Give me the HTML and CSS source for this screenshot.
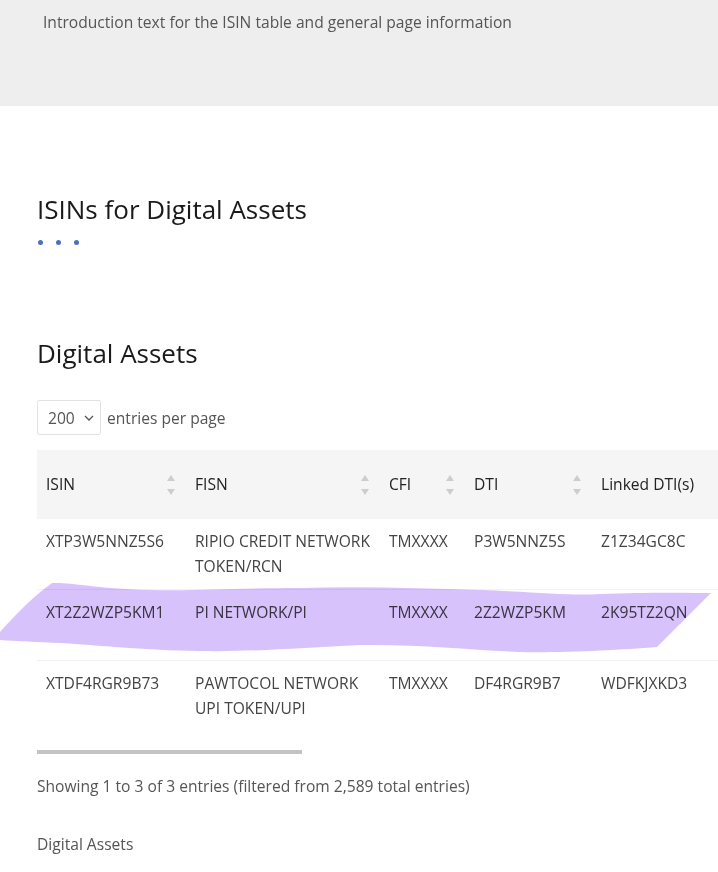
FILE: index.html
```html
<!DOCTYPE html>
<html lang="en">
<head>
<meta charset="utf-8">
<title>ISINs for Digital Assets</title>
<link rel="stylesheet" href="styles.css">
</head>
<body>
<header class="intro">
  <p class="intro-text">Introduction text for the ISIN table and general page information</p>
</header>

<main class="content">
  <section class="title-block">
    <h1 class="page-title">ISINs for Digital Assets</h1>
    <div class="dots"><span></span><span></span><span></span></div>
  </section>

  <section class="assets">
    <h2 class="section-title">Digital Assets</h2>
    <div class="length">
      <div class="select">
        <span class="select-value">200</span>
        <svg class="chev" width="10" height="6" viewBox="0 0 10 6"><path d="M1 1l4 4 4-4" fill="none" stroke="#555" stroke-width="1.3"/></svg>
      </div>
      <span class="length-label">entries per page</span>
    </div>

    <div class="table-wrap">
      <table class="grid">
        <colgroup>
          <col class="c1"><col class="c2"><col class="c3"><col class="c4"><col class="c5">
        </colgroup>
        <thead>
          <tr>
            <th><span>ISIN</span><i class="sort"></i></th>
            <th><span>FISN</span><i class="sort"></i></th>
            <th><span>CFI</span><i class="sort"></i></th>
            <th><span>DTI</span><i class="sort"></i></th>
            <th><span>Linked DTI(s)</span></th>
          </tr>
        </thead>
        <tbody>
          <tr>
            <td>XTP3W5NNZ5S6</td>
            <td>RIPIO CREDIT NETWORK TOKEN/RCN</td>
            <td>TMXXXX</td>
            <td>P3W5NNZ5S</td>
            <td>Z1Z34GC8C</td>
          </tr>
          <tr>
            <td>XT2Z2WZP5KM1</td>
            <td>PI NETWORK/PI</td>
            <td>TMXXXX</td>
            <td>2Z2WZP5KM</td>
            <td>2K95TZ2QN</td>
          </tr>
          <tr>
            <td>XTDF4RGR9B73</td>
            <td>PAWTOCOL NETWORK UPI TOKEN/UPI</td>
            <td>TMXXXX</td>
            <td>DF4RGR9B7</td>
            <td>WDFKJXKD3</td>
          </tr>
        </tbody>
      </table>
    </div>
    <div class="scrollbar"><div class="thumb"></div></div>

    <p class="info">Showing 1 to 3 of 3 entries (filtered from 2,589 total entries)</p>
    <p class="caption">Digital Assets</p>
  </section>
</main>

<svg class="highlight" width="718" height="80" viewBox="0 580 718 80" aria-hidden="true">
  <path d="M52 583 C70 582 90 588 150 590 C200 591 240 588 300 588 C360 586 420 588 480 590 C540 592 570 596 600 594 C650 592 690 593 711 593 L657 647 C620 650 560 653 520 652 C470 650 420 644 360 645 C300 648 250 652 200 651 C140 650 110 646 60 643 C40 642 15 641 0 640 L0 632 C20 610 35 595 52 583 Z" fill="#d8c2fb"/>
</svg>
</body>
</html>
```

FILE: styles.css
```css
html, body {
  margin: 0;
  padding: 0;
  background: #ffffff;
}

body {
  position: relative;
  width: 718px;
  overflow: hidden;
  font-family: "Open Sans", "Noto Sans", "Liberation Sans", sans-serif;
  font-size: 15.6px;
  color: #555555;
}

.intro {
  background: #eeeeee;
  height: 106px;
  padding: 10px 0 0 43px;
  box-sizing: border-box;
}

.intro-text {
  margin: 0;
  line-height: 24px;
  color: #555555;
}

.content {
  padding-left: 37px;
}

.title-block {
  padding-top: 85px;
}

.page-title {
  margin: 0;
  font-size: 26px;
  font-weight: 500;
  line-height: 36px;
  color: #1a1a1a;
}

.dots {
  display: flex;
  gap: 13px;
  padding: 13px 0 0 1px;
}

.dots span {
  width: 5px;
  height: 5px;
  border-radius: 50%;
  background: #4a72b8;
}

.assets {
  padding-top: 90px;
}

.section-title {
  margin: 0;
  font-size: 26px;
  font-weight: 500;
  line-height: 36px;
  color: #1a1a1a;
}

.length {
  display: flex;
  align-items: center;
  gap: 6px;
  margin-top: 29px;
}

.select {
  display: flex;
  align-items: center;
  justify-content: space-between;
  box-sizing: border-box;
  width: 64px;
  height: 35px;
  padding: 0 6px 0 10px;
  border: 1px solid #e2e2e2;
  border-radius: 2px;
  background: #ffffff;
}

.select-value {
  color: #555555;
}

.chev {
  display: block;
}

.length-label {
  color: #555555;
}

.table-wrap {
  margin-top: 15px;
  overflow: hidden;
}

.grid {
  width: 820px;
  table-layout: fixed;
  border-collapse: collapse;
}

.c1 { width: 149px; }
.c2 { width: 194px; }
.c3 { width: 85px; }
.c4 { width: 127px; }
.c5 { width: 265px; }

.grid th {
  position: relative;
  height: 69px;
  padding: 0 9px;
  background: #f5f5f5;
  text-align: left;
  font-weight: 500;
  color: #222222;
  line-height: 25px;
}

.sort {
  position: absolute;
  right: 11px;
  top: 50%;
  width: 8px;
  height: 20px;
  margin-top: -10px;
}

.sort::before,
.sort::after {
  content: "";
  position: absolute;
  left: 0;
  border-left: 4px solid transparent;
  border-right: 4px solid transparent;
}

.sort::before {
  top: 0;
  border-bottom: 6px solid #cdcdcd;
}

.sort::after {
  bottom: 0;
  border-top: 6px solid #cdcdcd;
}

.grid td {
  height: 50px;
  padding: 10px 9px;
  vertical-align: top;
  line-height: 25px;
  color: #444444;
  border-top: 1px solid #f2f2f2;
}

.grid tbody tr:first-child td {
  border-top: 0;
}

.scrollbar {
  margin-top: 19px;
  height: 4px;
}

.thumb {
  width: 265px;
  height: 4px;
  background: #c3c3c3;
}

.info {
  margin: 20px 0 0;
  line-height: 24px;
  color: #555555;
}

.caption {
  margin: 34px 0 0;
  line-height: 24px;
  color: #555555;
}

.highlight {
  position: absolute;
  left: 0;
  top: 580px;
  mix-blend-mode: multiply;
  pointer-events: none;
}
```
